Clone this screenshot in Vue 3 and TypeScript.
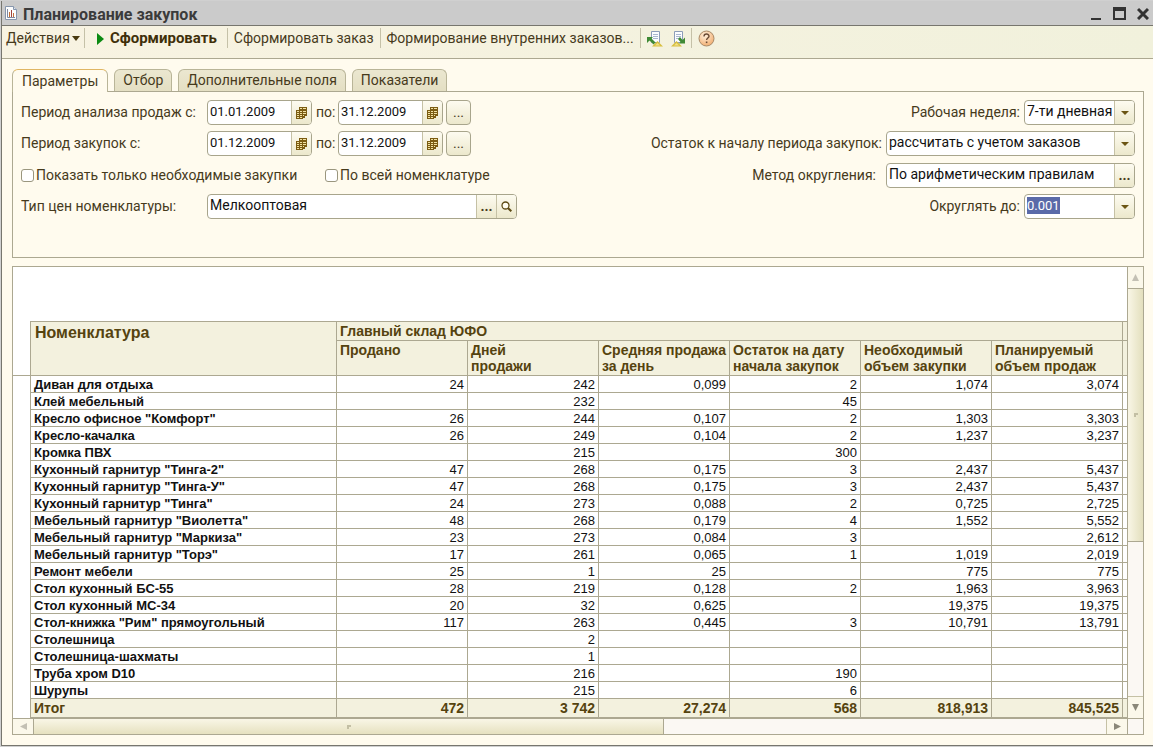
<script setup lang="ts">
import { onMounted, ref } from 'vue'

interface Row {
  name: string
  values: string[]
}

const tabs = ['Параметры', 'Отбор', 'Дополнительные поля', 'Показатели']
const activeTab = ref('Параметры')

const periods = ref([
  { id: 'sales', label: 'Период анализа продаж с:', from: '01.01.2009', to: '31.12.2009' },
  { id: 'purchase', label: 'Период закупок с:', from: '01.12.2009', to: '31.12.2009' },
])
const onlyNeeded = ref(false)
const allItems = ref(false)
const priceType = ref('Мелкооптовая')
const rounding = ref('По арифметическим правилам')
const precision = ref('0.001')
const precisionInput = ref<HTMLInputElement | null>(null)

const columns = [
  'Продано',
  'Дней\nпродажи',
  'Средняя продажа\nза день',
  'Остаток на дату\nначала закупок',
  'Необходимый\nобъем закупки',
  'Планируемый\nобъем продаж',
]

const rows: Row[] = [
  { name: 'Диван для отдыха', values: ['24', '242', '0,099', '2', '1,074', '3,074'] },
  { name: 'Клей мебельный', values: ['', '232', '', '45', '', ''] },
  { name: 'Кресло офисное "Комфорт"', values: ['26', '244', '0,107', '2', '1,303', '3,303'] },
  { name: 'Кресло-качалка', values: ['26', '249', '0,104', '2', '1,237', '3,237'] },
  { name: 'Кромка ПВХ', values: ['', '215', '', '300', '', ''] },
  { name: 'Кухонный гарнитур "Тинга-2"', values: ['47', '268', '0,175', '3', '2,437', '5,437'] },
  { name: 'Кухонный гарнитур "Тинга-У"', values: ['47', '268', '0,175', '3', '2,437', '5,437'] },
  { name: 'Кухонный гарнитур "Тинга"', values: ['24', '273', '0,088', '2', '0,725', '2,725'] },
  { name: 'Мебельный гарнитур "Виолетта"', values: ['48', '268', '0,179', '4', '1,552', '5,552'] },
  { name: 'Мебельный гарнитур "Маркиза"', values: ['23', '273', '0,084', '3', '', '2,612'] },
  { name: 'Мебельный гарнитур "Торэ"', values: ['17', '261', '0,065', '1', '1,019', '2,019'] },
  { name: 'Ремонт мебели', values: ['25', '1', '25', '', '775', '775'] },
  { name: 'Стол кухонный БС-55', values: ['28', '219', '0,128', '2', '1,963', '3,963'] },
  { name: 'Стол кухонный МС-34', values: ['20', '32', '0,625', '', '19,375', '19,375'] },
  { name: 'Стол-книжка "Рим" прямоугольный', values: ['117', '263', '0,445', '3', '10,791', '13,791'] },
  { name: 'Столешница', values: ['', '2', '', '', '', ''] },
  { name: 'Столешница-шахматы', values: ['', '1', '', '', '', ''] },
  { name: 'Труба хром D10', values: ['', '216', '', '190', '', ''] },
  { name: 'Шурупы', values: ['', '215', '', '6', '', ''] },
]
const totals = ['472', '3 742', '27,274', '568', '818,913', '845,525']

onMounted(() => {
  precisionInput.value?.focus()
  precisionInput.value?.select()
})
</script>

<template>
  <div class="window">
    <header class="titlebar">
      <svg class="app-icon" width="12" height="14" viewBox="0 0 12 14">
        <path d="M.5.5h8l3 3v10H.5z" fill="#fdfdfd" stroke="#8796ac" />
        <path d="M8.5.5v3h3" fill="#dde4ee" stroke="#8796ac" />
        <path d="M2.5 3v8.5H10" fill="none" stroke="#7d89a0" />
        <path d="M4 6h1v5H4z" fill="#c2703a" />
        <path d="M6 4h1v7H6z" fill="#a34438" />
        <path d="M8 7h1v4H8z" fill="#c2703a" />
      </svg>
      <h1>Планирование закупок</h1>
      <div class="window-buttons">
        <button type="button" aria-label="Свернуть">
          <svg width="12" height="14" viewBox="0 0 12 14"><path d="M1 12h10v2H1z" fill="#333" /></svg>
        </button>
        <button type="button" aria-label="Развернуть">
          <svg width="13" height="14" viewBox="0 0 13 14"><path d="M0 1h13v13H0zM2 5v7h9V5z" fill="#333" fill-rule="evenodd" /></svg>
        </button>
        <button type="button" aria-label="Закрыть">
          <svg width="12" height="14" viewBox="0 0 12 14"><path d="M1 3l10 10M11 3L1 13" stroke="#333" stroke-width="3" /></svg>
        </button>
      </div>
    </header>

    <nav class="toolbar">
      <button type="button" class="tool menu">
        Действия
        <svg width="8" height="5" viewBox="0 0 8 5"><path d="M0 0h8L4 5z" fill="#4a3a10" /></svg>
      </button>
      <span class="sep"></span>
      <button type="button" class="tool run">
        <svg width="7" height="12" viewBox="0 0 7 12"><path d="M0 0l7 6-7 6z" fill="#0b8a12" /></svg>
        Сформировать
      </button>
      <span class="sep"></span>
      <button type="button" class="tool order">Сформировать заказ</button>
      <span class="sep"></span>
      <button type="button" class="tool order">Формирование внутренних заказов...</button>
      <span class="sep"></span>
      <div class="icons">
        <button type="button" class="tool" aria-label="Восстановить настройки">
          <svg width="16" height="16" viewBox="0 0 16 16">
            <path d="M4.500.5h8v11h-8z" fill="#fbfcff" stroke="#8c9cb8" />
            <path d="M6 3.500h5M6 5.500h5M6 7.500h5" stroke="#a9b7cf" />
            <path d="M0 6h6L4.500 7.500l4 4-2 2-4-4L0 12z" fill="#3f8a35" />
            <path d="M5 15.500L10.500 10 16 15.500z" fill="#d8bf3f" />
            <path d="M8 14.500l2.500-2.500 2.500 2.500z" fill="#f1e189" />
          </svg>
        </button>
        <button type="button" class="tool" aria-label="Сохранить настройки">
          <svg width="16" height="16" viewBox="0 0 16 16">
            <path d="M3.500.5h8v11h-8z" fill="#fbfcff" stroke="#8c9cb8" />
            <path d="M5 3.500h5M5 5.500h5M5 7.500h5" stroke="#a9b7cf" />
            <path d="M0 15.500L5.500 10 11 15.500z" fill="#d8bf3f" />
            <path d="M3 14.500L5.500 12 8 14.500z" fill="#f1e189" />
            <path d="M14 12.500H8L9.500 11l-2.500-3L9 6l2.500 3L14 6.500z" fill="#3f8a35" />
          </svg>
        </button>
      </div>
      <span class="sep"></span>
      <button type="button" class="tool" aria-label="Справка">
        <svg width="17" height="17" viewBox="0 0 17 17">
          <defs>
            <radialGradient id="help-fill" cx=".4" cy=".3" r=".8">
              <stop offset="0" stop-color="#fff0dc" />
              <stop offset="1" stop-color="#f0a765" />
            </radialGradient>
          </defs>
          <circle cx="8.500" cy="8.500" r="7.500" fill="url(#help-fill)" stroke="#a98a68" />
          <path d="M6 6.500c0-3.200 5-3.200 5-.3 0 1.800-2.400 1.800-2.400 3.800" fill="none" stroke="#6b4b35" stroke-width="1.400" />
          <path d="M7.800 11.500h1.600v1.600H7.800z" fill="#6b4b35" />
        </svg>
      </button>
    </nav>

    <main class="content">
      <div class="tabs" role="tablist">
        <button
          v-for="tab in tabs"
          :key="tab"
          type="button"
          role="tab"
          class="tab"
          :class="{ active: tab === activeTab }"
          :aria-selected="tab === activeTab"
          @click="activeTab = tab"
        >
          {{ tab }}
        </button>
      </div>

      <section class="params">
        <div class="side">
          <div v-for="p in periods" :key="p.id" class="line">
            <label class="caption" :for="p.id + '-from'">{{ p.label }}</label>
            <div class="field date">
              <input :id="p.id + '-from'" v-model="p.from" class="digits" type="text" />
              <button type="button" aria-label="Календарь">
                <svg width="11" height="12" viewBox="0 0 11 12" shape-rendering="crispEdges">
                  <path d="M3 0h8v9h-2v2H7v1H0V3h3z" fill="#7b5c12" />
                  <path d="M4 1h2v1H4zM7 1h3v1H7zM1 4h2v1H1zM4 4h2v1H4zM7 4h3v1H7zM1 6h2v1H1zM4 6h2v1H4zM7 6h3v1H7zM1 8h2v1H1zM4 8h2v1H4zM7 8h1v1H7zM1 10h2v1H1zM4 10h2v1H4z" fill="#f2e3a4" />
                </svg>
              </button>
            </div>
            <label class="to" :for="p.id + '-to'">по:</label>
            <div class="field date">
              <input :id="p.id + '-to'" v-model="p.to" class="digits" type="text" />
              <button type="button" aria-label="Календарь">
                <svg width="11" height="12" viewBox="0 0 11 12" shape-rendering="crispEdges">
                  <path d="M3 0h8v9h-2v2H7v1H0V3h3z" fill="#7b5c12" />
                  <path d="M4 1h2v1H4zM7 1h3v1H7zM1 4h2v1H1zM4 4h2v1H4zM7 4h3v1H7zM1 6h2v1H1zM4 6h2v1H4zM7 6h3v1H7zM1 8h2v1H1zM4 8h2v1H4zM7 8h1v1H7zM1 10h2v1H1zM4 10h2v1H4z" fill="#f2e3a4" />
                </svg>
              </button>
            </div>
            <button type="button" class="more" aria-label="Выбрать период">...</button>
          </div>
          <div class="line checks">
            <label class="check first"><input v-model="onlyNeeded" type="checkbox" />Показать только необходимые закупки</label>
            <label class="check"><input v-model="allItems" type="checkbox" />По всей номенклатуре</label>
          </div>
          <div class="line">
            <label class="caption" for="price-type">Тип цен номенклатуры:</label>
            <div class="field price">
              <input id="price-type" v-model="priceType" type="text" />
              <button type="button" class="dots" aria-label="Выбрать">...</button>
              <button type="button" aria-label="Открыть">
                <svg width="11" height="11" viewBox="0 0 11 11">
                  <circle cx="4.500" cy="4.500" r="3.500" fill="#fffdf0" stroke="#5d4a14" stroke-width="1.300" />
                  <path d="M7 7l3.300 3.300" stroke="#5d4a14" stroke-width="2" />
                </svg>
              </button>
            </div>
          </div>
        </div>

        <div class="side right">
          <div class="line">
            <label for="week">Рабочая неделя:</label>
            <div class="field short">
              <select id="week"><option>7-ти дневная</option></select>
              <span class="arrow"><svg width="8" height="4" viewBox="0 0 8 4"><path d="M0 0h8L4 4z" fill="#6b5514" /></svg></span>
            </div>
          </div>
          <div class="line">
            <label for="rest">Остаток к началу периода закупок:</label>
            <div class="field long">
              <select id="rest"><option>рассчитать с учетом заказов</option></select>
              <span class="arrow"><svg width="8" height="4" viewBox="0 0 8 4"><path d="M0 0h8L4 4z" fill="#6b5514" /></svg></span>
            </div>
          </div>
          <div class="line checks">
            <label class="apart" for="rounding">Метод округления:</label>
            <div class="field long">
              <input id="rounding" v-model="rounding" type="text" />
              <button type="button" class="dots" aria-label="Выбрать метод">...</button>
            </div>
          </div>
          <div class="line">
            <label for="precision">Округлять до:</label>
            <div class="field short">
              <input id="precision" ref="precisionInput" v-model="precision" class="digits" type="text" />
              <button type="button" aria-label="Открыть список">
                <svg width="8" height="4" viewBox="0 0 8 4"><path d="M0 0h8L4 4z" fill="#6b5514" /></svg>
              </button>
            </div>
          </div>
        </div>
      </section>

      <section class="report">
        <div class="sheet">
          <table>
            <colgroup>
              <col class="c-gutter" />
              <col class="c-name" />
              <col v-for="c in columns" :key="c" class="c-value" />
              <col />
            </colgroup>
            <thead>
              <tr class="group">
                <td class="gutter" rowspan="2"></td>
                <th class="name" rowspan="2" scope="col">Номенклатура</th>
                <th :colspan="columns.length" scope="colgroup">Главный склад ЮФО</th>
                <th class="stub"></th>
              </tr>
              <tr class="heads">
                <th v-for="c in columns" :key="c" scope="col">{{ c }}</th>
                <th class="stub"></th>
              </tr>
            </thead>
            <tbody>
              <tr v-for="row in rows" :key="row.name">
                <td class="gutter"></td>
                <th scope="row">{{ row.name }}</th>
                <td v-for="(value, i) in row.values" :key="i">{{ value }}</td>
                <td class="stub"></td>
              </tr>
            </tbody>
            <tfoot>
              <tr>
                <td class="gutter"></td>
                <th scope="row">Итог</th>
                <td v-for="(value, i) in totals" :key="i">{{ value }}</td>
                <td class="stub"></td>
              </tr>
            </tfoot>
          </table>
        </div>
        <div class="vbar">
          <button type="button" aria-label="Вверх"><svg width="7" height="7" viewBox="0 0 7 7"><path d="M3.500 0L7 7H0z" fill="#c3c0b4" /></svg></button>
          <div class="thumb"><i class="grip"></i></div>
          <div class="track"></div>
          <button type="button" aria-label="Вниз"><svg width="7" height="7" viewBox="0 0 7 7"><path d="M0 0h7L3.500 7z" fill="#8a8778" /></svg></button>
        </div>
        <div class="hbar">
          <button type="button" aria-label="Влево"><svg width="7" height="7" viewBox="0 0 7 7"><path d="M7 0v7L0 3.500z" fill="#c3c0b4" /></svg></button>
          <div class="thumb"><i class="grip"></i></div>
          <div class="track"></div>
          <button type="button" aria-label="Вправо"><svg width="7" height="7" viewBox="0 0 7 7"><path d="M0 0l7 3.500L0 7z" fill="#8a8778" /></svg></button>
        </div>
        <div class="corner"></div>
      </section>
    </main>
  </div>
</template>

<style>
body {
  margin: 0;
  background: #d0d0d0;
}
</style>

<style scoped>
* {
  box-sizing: border-box;
}

.window {
  margin: 1px 0 1px 1px;
  border-left: 1px solid #77766e;
  border-bottom: 1px solid #77766e;
  background: #fffbee;
  color: #463a1c;
  font-family: Roboto, 'Liberation Sans', sans-serif;
  font-size: 14px;
  line-height: 17px;
}

button,
input,
select {
  margin: 0;
  padding: 0;
  border: 0;
  border-radius: 0;
  background: none;
  color: inherit;
  font: inherit;
  outline: none;
}

button {
  display: flex;
  align-items: center;
  justify-content: center;
}

.titlebar {
  display: flex;
  align-items: center;
  gap: 6px;
  height: 25px;
  padding: 0 4px 0 3px;
  border-bottom: 1px solid #77766e;
  background: #cbcbcb;
}

h1 {
  margin: 0;
  padding-top: 2px;
  color: #3b3b3b;
  font-size: 16px;
  font-weight: 700;
}

.window-buttons {
  display: flex;
  gap: 11px;
  margin-left: auto;
}

.toolbar {
  display: flex;
  align-items: flex-start;
  height: 33px;
  padding: 2px 4px;
  border-bottom: 1px solid #aca891;
  background: linear-gradient(90deg, #f8f3e2, #f1f1dc);
}

.tool {
  height: 21px;
  white-space: nowrap;
}

.menu {
  gap: 2px;
}

.run {
  gap: 6px;
  padding: 0 6px;
  color: #3f2f0a;
  font-size: 15px;
  font-weight: 700;
}

.order {
  padding-right: 2px;
}

.icons {
  display: flex;
  gap: 8px;
}

.sep {
  width: 1px;
  height: 20px;
  margin: 0 6px 0 4px;
  background: #c5c1a8;
}

.content {
  padding: 10px 9px 10px 10px;
}

.tabs {
  display: flex;
  gap: 6px;
}

.tab {
  height: 22px;
  padding: 0 8px;
  border: 1px solid #b9b598;
  border-bottom: 0;
  border-radius: 6px 6px 0 0;
  background: linear-gradient(#ebe7d0, #e4dfc3);
}

.tab.active {
  position: relative;
  height: 23px;
  margin-bottom: -1px;
  padding: 0 9px;
  border-top-color: #e0b664;
  background: #fffbee;
}

.params {
  display: flex;
  justify-content: space-between;
  min-height: 167px;
  padding: 8px;
  border: 1px solid #aca891;
}

.side {
  display: flex;
  flex-direction: column;
  gap: 6px;
}

.line {
  display: flex;
  align-items: center;
  height: 25px;
}

.checks {
  height: 26px;
}

.right .line {
  justify-content: flex-end;
  gap: 4px;
}

.right .apart {
  margin-right: 6px;
}

.caption {
  width: 186px;
}

.to {
  width: 26px;
  padding-left: 4px;
}

.field {
  display: flex;
  height: 25px;
  overflow: hidden;
  border: 1px solid #a8a58c;
  border-radius: 4px;
  background: #fff;
}

.field input,
.field select {
  flex: 1;
  min-width: 0;
  padding: 0 2px 2px;
  color: #111;
}

.field select {
  appearance: none;
}

.field .digits {
  font-size: 13px;
}

.field .digits::selection {
  background: #5a6aa8;
  color: #fff;
}

.field button,
.arrow {
  display: flex;
  align-items: center;
  justify-content: center;
  flex: none;
  width: 20px;
  border-left: 1px solid #c5c1a5;
  background: linear-gradient(#fdfbf0, #ece8cc);
}

.date {
  width: 105px;
}

.price {
  width: 310px;
}

.short {
  width: 111px;
}

.long {
  width: 249px;
}

.dots {
  font-weight: 700;
}

.more {
  width: 25px;
  height: 25px;
  margin-left: 3px;
  border: 1px solid #a8a58c;
  border-radius: 4px;
  background: linear-gradient(#fdfbf0, #ece8cc);
}

.check {
  display: flex;
  align-items: center;
  gap: 2px;
}

.check.first {
  width: 304px;
}

.check input {
  appearance: none;
  width: 13px;
  height: 13px;
  border: 1px solid #9a967e;
  border-radius: 3px;
  background: #fff;
}

.check input:checked {
  background: #7b5c12;
}

.report {
  display: grid;
  grid-template-columns: minmax(0, 1fr) 16px;
  margin-top: 8px;
  border: 1px solid #aca891;
  background: #fff;
}

.sheet {
  overflow: hidden;
  padding-top: 54px;
}

table {
  width: 100%;
  border-spacing: 0;
  table-layout: fixed;
  color: #111;
  font-family: 'Liberation Sans', Arial, sans-serif;
  font-size: 13px;
  line-height: 15px;
}

.c-gutter {
  width: 18px;
}

.c-name {
  width: 306px;
}

.c-value {
  width: 131px;
}

th,
td {
  height: 17px;
  padding: 1px 3px 0;
  overflow: hidden;
  border-right: 1px solid #aca891;
  border-bottom: 1px solid #aca891;
  text-align: right;
  white-space: nowrap;
}

th {
  text-align: left;
}

thead th {
  background: #f3f1de;
  color: #55430f;
  font-size: 14px;
  line-height: 16px;
  vertical-align: top;
  white-space: pre;
}

.group th {
  height: 20px;
  border-top: 1px solid #aca891;
}

.heads th {
  height: 35px;
}

.group .name {
  padding: 3px 4px;
  font-size: 16px;
}

td.gutter {
  border-bottom: 0;
}

thead td.gutter {
  border-bottom: 1px solid #aca891;
}

th.stub,
td.stub {
  padding: 0;
  border-right: 0;
}

tfoot th,
tfoot td:not(.gutter) {
  height: 19px;
  background: #f3f1de;
  color: #55430f;
  font-size: 14px;
  font-weight: 700;
}

.vbar {
  display: flex;
  flex-direction: column;
  border-left: 1px solid #aca891;
}

.vbar button {
  height: 21px;
  background: #fbf8ea;
}

.vbar .thumb {
  flex: 254;
  border: solid #aca891;
  border-width: 1px 0;
  background: linear-gradient(90deg, #f9f6e6, #e3dfbd);
}

.vbar .track {
  flex: 155;
  border-bottom: 1px solid #c5c1a5;
  background: #fbf8f3;
}

.hbar {
  display: flex;
  height: 16px;
  border-top: 1px solid #aca891;
}

.hbar button {
  width: 20px;
  background: #fbf8ea;
}

.hbar .thumb {
  flex: 631;
  border: solid #aca891;
  border-width: 0 1px;
  background: linear-gradient(#f9f6e6, #e6e1c0);
}

.hbar .track {
  flex: 443;
  border-right: 1px solid #c5c1a5;
  background: #fbf8f3;
}

.thumb {
  display: flex;
  align-items: center;
  justify-content: center;
}

.grip {
  width: 4px;
  height: 4px;
  border: solid #c3bfa4;
  border-width: 2px 0 0 2px;
}

.corner {
  border-top: 1px solid #aca891;
  border-left: 1px solid #aca891;
  background: #fbf8f3;
}
</style>
